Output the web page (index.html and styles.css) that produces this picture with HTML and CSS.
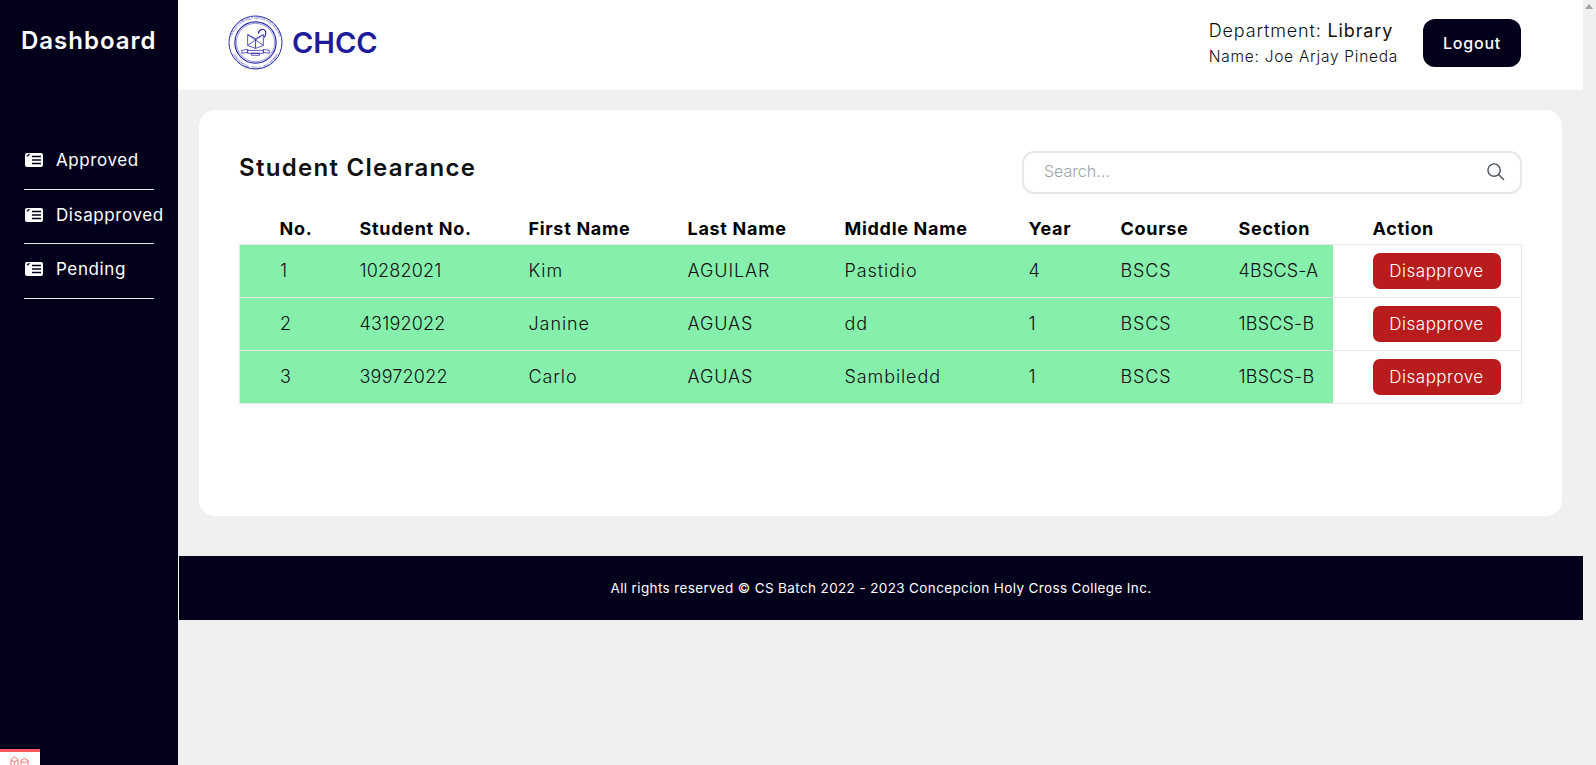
FILE: index.html
```html
<!DOCTYPE html>
<html>
<head>
    <title>Student Clearance</title>
    <link rel="stylesheet" href="styles.css">
</head>
<body>
    <svg class="defs" width="0" height="0">
        <symbol id="list-icon" viewBox="0 0 18 14">
            <rect width="18" height="14" rx="2" fill="#fff"/>
            <path d="M2 3.2 4.5 1.2" stroke="#03001c" stroke-width="1.4"/>
            <path d="M7 3.500H16M7 7H16M7 10.500H16" stroke="#03001c" stroke-width="1.6"/>
        </symbol>
    </svg>

    <aside class="sidebar">
        <h2 class="brand">Dashboard</h2>
        <nav class="side-nav">
            <a class="side-link"><svg class="side-icon"><use href="#list-icon"/></svg>Approved</a>
            <a class="side-link"><svg class="side-icon"><use href="#list-icon"/></svg>Disapproved</a>
            <a class="side-link"><svg class="side-icon"><use href="#list-icon"/></svg>Pending</a>
        </nav>
        <div class="corner-badge">
            <svg width="22" height="10" viewBox="0 0 22 10" fill="none" stroke="#f87171" stroke-width="1">
                <path d="M3 10V3.5L6.5 1 10 3.5V10M3 4l3.5 2L10 4M6.5 6v4"/>
                <path d="M13 10V4.5L16.5 2.5 20 4.5V10M13 5l3.5 2L20 5"/>
            </svg>
        </div>
    </aside>

    <div class="main">
        <header class="topbar">
            <div class="logo">
                <svg class="seal" viewBox="0 0 56 56">
                    <defs>
                        <path id="seal-top" d="M3.500 34a25 25 0 1 1 49 0"/>
                        <path id="seal-bottom" d="M3 30a25 25 0 0 0 50 0"/>
                    </defs>
                    <g fill="none" stroke="#2b2ba8">
                        <circle cx="28" cy="28" r="27" stroke-width="1"/>
                        <circle cx="28" cy="28" r="21" stroke-width="1.2"/>
                        <circle cx="28" cy="28" r="19.500" stroke-width=".5"/>
                        <path d="M20 20l8 4 8-4v11l-8 3-8-3zM28 24v10M20 20l16 11M36 20 20 31" stroke-width=".8"/>
                        <path d="M31 19c0-4 5-6 7-3 1 2 0 5-1 7" stroke-width="1.2"/>
                        <path d="M14 36l6-1v3l-6 1zM42 36l-6-1v3l6 1zM20 36h16v3H20zM24 39h8v2h-8z" stroke-width=".8"/>
                    </g>
                    <text class="seal-text"><textPath href="#seal-top" startOffset="50%" text-anchor="middle">CONCEPCION HOLY CROSS COLLEGE INC.</textPath></text>
                    <text class="seal-text"><textPath href="#seal-bottom" startOffset="50%" text-anchor="middle">CONCEPCION, TARLAC, PHILIPPINES</textPath></text>
                </svg>
                <span class="logo-name">CHCC</span>
            </div>
            <div class="user-area">
                <div class="user-info">
                    <div class="user-dept">Department: <span class="user-strong">Library</span></div>
                    <div class="user-name">Name: Joe Arjay Pineda</div>
                </div>
                <button class="logout-btn">Logout</button>
            </div>
        </header>

        <section class="card">
            <div class="card-head">
                <h2 class="card-title">Student Clearance</h2>
                <div class="search">
                    <input class="search-input" type="text" placeholder="Search...">
                    <svg class="search-icon" viewBox="0 0 20 20" fill="none" stroke="#4b5563" stroke-width="1.5" stroke-linecap="round">
                        <circle cx="8.500" cy="8.500" r="6.500"/>
                        <path d="M13.500 13.500 18.500 18.500"/>
                    </svg>
                </div>
            </div>

            <table class="clearance">
                <colgroup>
                    <col class="c-no"><col class="c-student"><col class="c-first"><col class="c-last">
                    <col class="c-middle"><col class="c-year"><col class="c-course"><col class="c-section"><col>
                </colgroup>
                <thead>
                    <tr>
                        <th>No.</th><th>Student No.</th><th>First Name</th><th>Last Name</th>
                        <th>Middle Name</th><th>Year</th><th>Course</th><th>Section</th><th>Action</th>
                    </tr>
                </thead>
                <tbody>
                    <tr>
                        <td>1</td><td class="num">10282021</td><td>Kim</td><td>AGUILAR</td>
                        <td>Pastidio</td><td>4</td><td>BSCS</td><td class="num">4BSCS-A</td>
                        <td class="action"><button class="disapprove-btn">Disapprove</button></td>
                    </tr>
                    <tr>
                        <td>2</td><td class="num">43192022</td><td>Janine</td><td>AGUAS</td>
                        <td>dd</td><td>1</td><td>BSCS</td><td class="num">1BSCS-B</td>
                        <td class="action"><button class="disapprove-btn">Disapprove</button></td>
                    </tr>
                    <tr>
                        <td>3</td><td class="num">39972022</td><td>Carlo</td><td>AGUAS</td>
                        <td>Sambiledd</td><td>1</td><td>BSCS</td><td class="num">1BSCS-B</td>
                        <td class="action"><button class="disapprove-btn">Disapprove</button></td>
                    </tr>
                </tbody>
            </table>
        </section>

        <footer class="footer">All rights reserved © CS Batch 2022 - 2023 Concepcion Holy Cross College Inc.</footer>
    </div>

    <div class="scroll-strip"><span class="scroll-up"></span></div>
</body>
</html>
```

FILE: styles.css
```css
* {
    box-sizing: border-box;
}

body {
    margin: 0;
    height: 765px;
    display: flex;
    overflow: hidden;
    background: #f0f0f0;
    color: #111;
    font-family: "Inter", "Liberation Sans", sans-serif;
}

.defs {
    position: absolute;
}

/* sidebar */
.sidebar {
    position: relative;
    width: 178px;
    flex: none;
    padding-top: 24px;
    background: #03001c;
    color: #fff;
}

.brand {
    margin: 0 0 0 21px;
    font-size: 24px;
    line-height: 33px;
    font-weight: 600;
    letter-spacing: 1px;
}

.side-nav {
    display: flex;
    flex-direction: column;
    width: 130px;
    margin: 78px 0 0 24px;
}

.side-link {
    display: flex;
    align-items: center;
    gap: 13px;
    height: 54.5px;
    padding: 0 0 3px 1px;
    border-bottom: 1px solid #e5e5e5;
    font-size: 17px;
    letter-spacing: .6px;
    white-space: nowrap;
}

.side-icon {
    width: 18px;
    height: 14px;
    flex: none;
}

.corner-badge {
    position: absolute;
    left: 0;
    bottom: 0;
    width: 40px;
    height: 16px;
    padding: 4px 0 0 8px;
    background: #fff;
    border-top: 3px solid #f8585f;
}

.corner-badge svg {
    display: block;
}

/* main column */
.main {
    flex: 1;
    min-width: 0;
}

.topbar {
    display: flex;
    justify-content: space-between;
    align-items: center;
    height: 90px;
    padding: 0 62px 0 50px;
    background: #fff;
}

.logo {
    display: flex;
    align-items: center;
    gap: 9px;
    margin-top: -6px;
}

.seal {
    width: 55px;
    height: 55px;
}

.seal-text {
    font-family: "Liberation Sans", sans-serif;
    font-size: 3.200px;
    fill: #2b2ba8;
}

.logo-name {
    font-size: 29px;
    font-weight: 600;
    color: #1e1b9b;
}

.user-area {
    display: flex;
    align-items: center;
    gap: 25px;
    margin-top: -4px;
}

.user-dept {
    font-size: 18px;
    line-height: 24px;
    font-weight: 300;
    letter-spacing: .85px;
}

.user-strong {
    font-weight: 400;
}

.user-name {
    margin-top: 3px;
    font-size: 15.500px;
    line-height: 22px;
    font-weight: 300;
    letter-spacing: .73px;
}

.logout-btn {
    width: 98px;
    height: 48px;
    padding-bottom: 2px;
    border: 0;
    border-radius: 12px;
    background: #03001c;
    color: #fff;
    font: 500 16px "Inter", sans-serif;
    letter-spacing: .8px;
}

.card {
    height: 406px;
    margin: 20px 21px 40px;
    padding: 41px 40px;
    border-radius: 16px;
    background: #fff;
}

.card-head {
    display: flex;
    justify-content: space-between;
    align-items: flex-start;
    height: 63px;
}

.card-title {
    margin: 0;
    font-size: 24px;
    line-height: 34px;
    font-weight: 600;
    letter-spacing: 1.3px;
}

.search {
    position: relative;
    width: 500px;
}

.search-input {
    display: block;
    width: 100%;
    height: 43px;
    padding: 0 50px 3px 20px;
    border: 2px solid #e5e7eb;
    border-radius: 12px;
    font: 300 16px "Inter", sans-serif;
    outline: none;
}

.search-input::placeholder {
    color: #9ca3af;
}

.search-icon {
    position: absolute;
    top: 11px;
    right: 17px;
    width: 19px;
    height: 19px;
}

/* table */
.clearance {
    width: 1283px;
    table-layout: fixed;
    border-collapse: collapse;
    font-size: 18px;
}

.c-no { width: 80px; }
.c-student { width: 169px; }
.c-first { width: 159px; }
.c-last { width: 157px; }
.c-middle { width: 184px; }
.c-year { width: 92px; }
.c-course { width: 118px; }
.c-section { width: 134px; }

.clearance th {
    height: 30px;
    padding: 0 0 0 40px;
    text-align: left;
    font-size: 18px;
    font-weight: 700;
    letter-spacing: .7px;
    color: #000;
    white-space: nowrap;
}

.clearance td {
    height: 53px;
    padding: 0 0 0 40px;
    background: #86efac;
    border-top: 1px solid #e5e7eb;
    border-bottom: 1px solid #e5e7eb;
    font-weight: 300;
    letter-spacing: .9px;
    white-space: nowrap;
}

.clearance td.num {
    letter-spacing: .2px;
}

.clearance td:first-child {
    border-left: 1px solid #e5e7eb;
}

.clearance td.action {
    background: #fff;
    border-right: 1px solid #e5e7eb;
}

.disapprove-btn {
    display: block;
    width: 128px;
    height: 36px;
    border: 0;
    border-radius: 7px;
    background: #b91c1c;
    color: #fff;
    font: 300 17px "Inter", sans-serif;
    letter-spacing: .5px;
}

.footer {
    height: 64px;
    line-height: 64px;
    border-left: 1px solid #fff;
    background: #03001c;
    color: #fff;
    text-align: center;
    font-size: 13.500px;
    letter-spacing: .37px;
}

.scroll-strip {
    width: 13px;
    flex: none;
    padding: 4px 0 0 2px;
    background: #f0f0f0;
}

.scroll-up {
    display: block;
    width: 0;
    height: 0;
    border-left: 4px solid transparent;
    border-right: 4px solid transparent;
    border-bottom: 5px solid #a3a3a3;
}
```
